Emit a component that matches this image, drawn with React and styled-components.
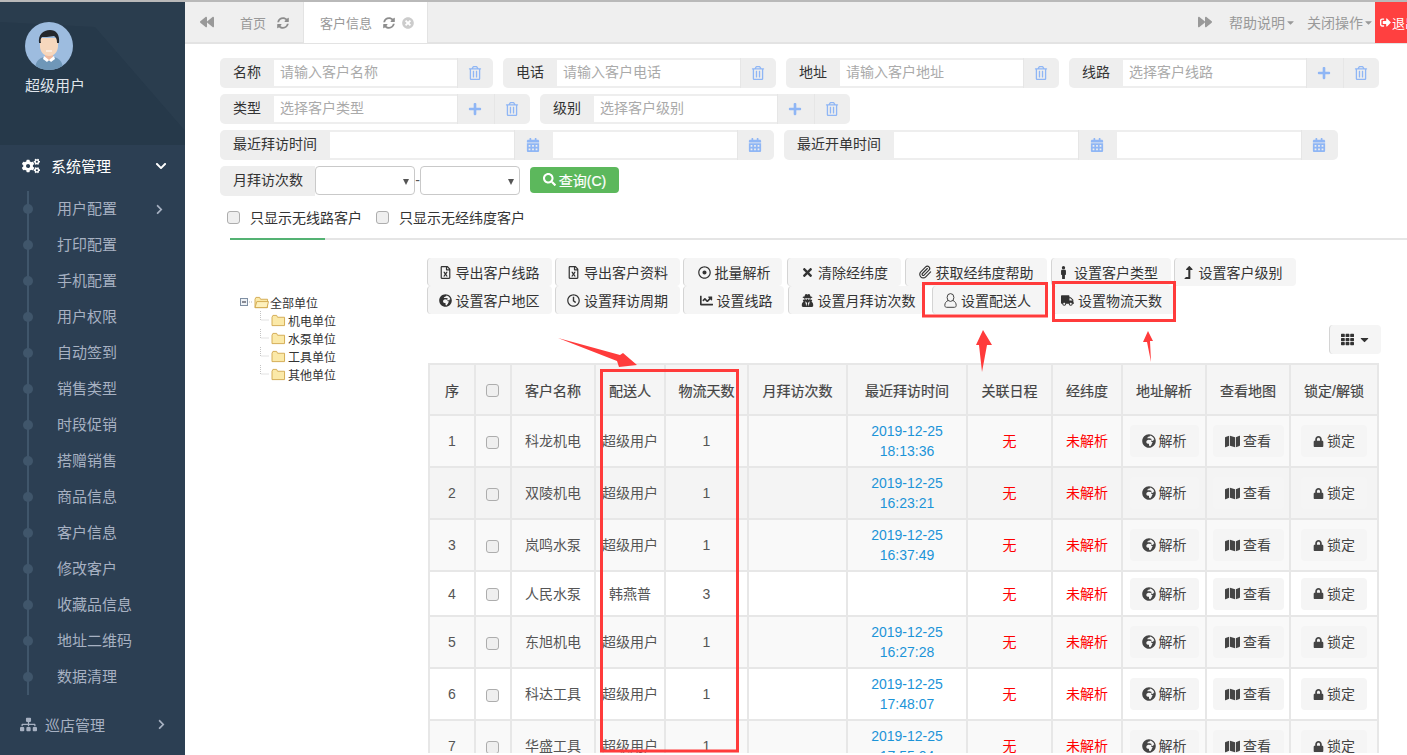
import React from 'react';
import styled, { createGlobalStyle } from 'styled-components';
import {
  FaCogs, FaChevronDown, FaChevronRight, FaSitemap, FaBackward, FaForward, FaSyncAlt, FaTimesCircle,
  FaRegTrashAlt, FaPlus, FaCalendarAlt, FaSearch, FaRegFileExcel, FaRegDotCircle, FaTimes,
  FaMale, FaLevelUpAlt, FaGlobeAfrica, FaRegClock, FaChartLine, FaUserSecret, FaTruck, FaTh,
  FaMap, FaLock, FaSignOutAlt, FaCaretDown,
} from 'react-icons/fa';
import { Paperclip } from 'lucide-react';

const Global = createGlobalStyle`
  html, body { margin: 0; padding: 0; height: 100%; overflow: hidden; background: #fff; }
  body { font-family: "Liberation Sans", "Noto Sans CJK SC", sans-serif; font-size: 14px; color: #555; }
  * { box-sizing: border-box; }
`;

const Page = styled.div`
  position: relative;
  display: flex;
  height: 755px;
  width: 1407px;
  overflow: hidden;
  border-top: 2px solid #b9b9b9;
`;
const Sidebar = styled.aside`
  width: 185px;
  flex: none;
  background: #2c3f53;
  color: #a7b1c2;
`;
const Profile = styled.div`
  position: relative;
  height: 143px;
  background: #26394a;
  padding: 20px 0 0 25px;
  overflow: hidden;
  &::before {
    content: '';
    position: absolute;
    inset: 0;
    background: #2a3d4e;
    clip-path: polygon(0 0, 100% 0, 100% 90%, 95px 25px, 0 20px);
  }
`;
const AvatarSvg = styled.svg`
  position: relative;
  display: block;
  width: 48px;
  height: 48px;
`;
const ProfileName = styled.div`
  position: relative;
  margin-top: 5px;
  font-size: 15px;
  line-height: 22px;
  color: #dfe4ea;
`;
const MenuHead = styled.div`
  height: 44px;
  display: flex;
  align-items: center;
  padding: 0 18px 3px ${p => (p.$open ? 22 : 20)}px;
  font-size: 15px;
  color: ${p => (p.$open ? '#fff' : '#a7b1c2')};
  margin-top: ${p => p.$mt || 0}px;
  span { margin-left: ${p => (p.$open ? 11 : 8)}px; flex: 1; }
`;
const SubMenu = styled.ul`
  position: relative;
  list-style: none;
  margin: 2px 0 0;
  padding: 0;
  &::before {
    content: '';
    position: absolute;
    left: 27px;
    top: 0;
    bottom: 0;
    width: 2px;
    background: #40566b;
  }
`;
const SubItem = styled.li`
  position: relative;
  height: 36px;
  line-height: 36px;
  padding: 0 20px 0 57px;
  font-size: 15px;
  color: #a7b1c2;
  display: flex;
  align-items: center;
  justify-content: space-between;
  &::before {
    content: '';
    position: absolute;
    left: 23px;
    top: 13px;
    width: 10px;
    height: 10px;
    border-radius: 50%;
    background: #40566b;
  }
`;
const Main = styled.main`
  flex: 1;
  min-width: 0;
  height: 751px;
  overflow: hidden;
  display: flex;
  flex-direction: column;
`;
const TabBar = styled.div`
  height: 42px;
  flex: none;
  background: #efefef;
  border-bottom: 2px solid #e3e3e3;
  display: flex;
  align-items: stretch;
  color: #999;
  font-size: 13px;
`;
const TabArrow = styled.div`
  width: ${p => p.$w}px;
  display: flex;
  align-items: center;
  justify-content: center;
  color: #999;
  font-size: 14px;
`;
const Tab = styled.div`
  display: flex;
  align-items: center;
  padding: ${p => (p.$active ? '0 13px 0 16px' : '0 14px 0 12px')};
  background: ${p => (p.$active ? '#fff' : 'transparent')};
  border-right: 1px solid #e3e3e3;
  margin-bottom: -1px;
  svg { color: #8d8d8d; font-size: 12px; margin-left: 11px; }
  svg.close { color: #ccc; margin-left: 7px; }
`;
const Spacer = styled.div`flex: 1;`;
const TabMenu = styled.div`
  display: flex;
  align-items: center;
  padding: 0 1px 0 0;
  margin-left: ${p => p.$ml || 0}px;
  font-size: 14px;
  svg { font-size: 11px; }
`;
const Logout = styled.div`
  width: 32px;
  background: #ff4040;
  color: #fff;
  display: flex;
  align-items: center;
  padding-left: 5px;
  overflow: hidden;
  white-space: nowrap;
  font-size: 13px;
  margin-bottom: -1px;
  svg { flex: none; font-size: 11px; margin-right: 1px; }
`;
const Content = styled.div`
  padding: 14px 0 0 35px;
  flex: 1;
`;
const FormRow = styled.div`
  display: flex;
  gap: 10px;
  height: 30px;
  margin-bottom: 6px;
`;
const Group = styled.div`
  display: flex;
  width: ${p => p.$w}px;
  height: 30px;
`;
const Label = styled.div`
  width: ${p => p.$w || 54}px;
  flex: none;
  background: #eee;
  border-radius: 5px 0 0 5px;
  color: #333;
  font-size: 14px;
  line-height: 28px;
  padding-left: 13px;
`;
const TextBox = styled.div`
  flex: 1;
  background: #fff;
  border-top: 2px solid #eee;
  border-bottom: 2px solid #eee;
  color: #aaa;
  font-size: 14px;
  line-height: 24px;
  padding-left: 6px;
`;
const Addon = styled.div`
  width: ${p => p.$w || 36}px;
  flex: none;
  background: #eee;
  display: flex;
  align-items: center;
  justify-content: center;
  color: #8fb6f5;
  font-size: 14px;
  padding-right: 2px;
  border-left: 1px solid #e6e6e6;
  &:last-child { border-radius: 0 5px 5px 0; }
`;
const SelectBox = styled.div`
  position: relative;
  width: 100px;
  height: 29px;
  background: #fff;
  border: 1px solid #c9c9c9;
  border-radius: 4px;
  &::after {
    content: '';
    position: absolute;
    right: 5px;
    top: 12px;
    border-left: 3.5px solid transparent;
    border-right: 3.5px solid transparent;
    border-top: 6px solid #555;
  }
`;
const Dash = styled.span`
  width: 5px;
  color: #555;
  line-height: 28px;
  text-align: center;
`;
const InlineGroup = styled.div`
  display: flex;
  height: 30px;
`;
const SearchBtn = styled.div`
  width: 89px;
  height: 26px;
  margin: 1px 0 0 10px;
  background: #5cb85c;
  color: #fff;
  border-radius: 4px;
  font-size: 14px;
  padding-bottom: 1px;
  display: flex;
  align-items: center;
  justify-content: center;
  gap: 3px;
  -webkit-text-stroke: 0.2px #fff;
  svg { font-size: 13px; }
`;
const Checks = styled.div`
  display: flex;
  align-items: center;
  height: 30px;
  margin: 2px 0 0 7px;
  color: #333;
  font-size: 14px;
`;
const Box = styled.span`
  display: block;
  width: 13px;
  height: 13px;
  background: #efefef;
  border: 1px solid #adadad;
  border-radius: 3px;
  flex: none;
`;
const TableBox = styled(Box)`
  margin: 2px auto 0;
  transform: translateX(-1px);
`;
const CheckText = styled.span`
  margin: 0 14px 0 10px;
`;
const TabLine = styled.div`
  margin: 6px 0 0 10px;
  height: 2px;
  background: #e5e5e5;
  &::before {
    content: '';
    display: block;
    width: 95px;
    height: 2px;
    background: #54b273;
  }
`;
const Lower = styled.div`
  display: flex;
  margin-top: 18px;
`;
const TreePane = styled.div`
  width: 207px;
  flex: none;
  padding: 35px 0 0 20px;
  font-size: 12px;
  color: #333;
`;
const TreeRow = styled.div`
  display: flex;
  align-items: center;
  height: 18px;
  gap: ${p => (p.$child ? 2 : 1)}px;
  padding-left: ${p => (p.$child ? 19 : 0)}px;
  svg { flex: none; }
`;
const RightPane = styled.div`
  width: 954px;
  flex: none;
`;
const ToolRow = styled.div`
  display: flex;
  height: 28px;
`;
const ToolBtn = styled.div`
  width: ${p => p.$w}px;
  margin-right: ${p => p.$mr ?? 3}px;
  height: 28px;
  flex: none;
  background: #f5f5f5;
  border-left: 1px solid #d4d4d4;
  border-radius: 4px;
  color: #333;
  font-size: 14px;
  padding: 0 ${p => p.$pr || 0}px 0 ${p => p.$pl || 0}px;
  display: flex;
  align-items: center;
  justify-content: center;
  gap: 4px;
  white-space: nowrap;
  svg { font-size: 13px; flex: none; }
`;
const ColumnsRow = styled.div`
  display: flex;
  justify-content: flex-end;
  margin: 11px 0 9px;
  height: 29px;
`;
const ColumnsBtn = styled.div`
  width: 52px;
  height: 29px;
  background: #f5f5f5;
  border-left: 1px solid #d4d4d4;
  border-radius: 4px;
  color: #333;
  display: flex;
  align-items: center;
  justify-content: center;
  gap: 4px;
  svg { font-size: 13px; }
`;
const Table = styled.table`
  width: 949px;
  margin-left: 1px;
  table-layout: fixed;
  border-collapse: collapse;
  font-size: 14px;
  color: #555;
`;
const HeadRow = styled.tr`
  height: 51px;
`;
const Th = styled.th`
  background: #f5f5f5;
  border: 2px solid #e7e7e7;
  color: #444;
  font-size: 14px;
  font-weight: normal;
  -webkit-text-stroke: 0.2px #444;
  text-align: center;
  padding: 0;
`;
const Tr = styled.tr`
  height: ${p => p.$h}px;
  background: ${p => p.$bg};
`;
const Td = styled.td`
  border: 2px solid #e7e7e7;
  text-align: center;
  padding: 0;
  line-height: 20px;
  white-space: nowrap;
  color: ${p => p.$color || '#555'};
`;
const DateCell = styled.div`
  color: #1c94d8;
  font-size: 14px;
  line-height: 20px;
`;
const CellBtn = styled.div`
  display: inline-flex;
  vertical-align: middle;
  align-items: center;
  justify-content: center;
  gap: 3px;
  width: ${p => p.$w}px;
  height: 32px;
  background: #f5f5f5;
  border-radius: 4px;
  color: #444;
  font-size: 14px;
  svg { font-size: ${p => p.$icon || 13}px; }
`;
const Overlay = styled.svg`
  position: absolute;
  left: 0;
  top: -2px;
  width: 1407px;
  height: 755px;
  pointer-events: none;
`;

const Avatar = () => (
  <AvatarSvg viewBox="0 0 48 48">
    <clipPath id="av"><circle cx="24" cy="24" r="24" /></clipPath>
    <g clipPath="url(#av)">
      <rect width="48" height="48" fill="#9dbcdf" />
      <path d="M10 48 C10 38 15 35 24 34 C33 35 38 38 38 48Z" fill="#6f97b8" />
      <path d="M20 30h8v6l-4 3-4-3z" fill="#eeb9a0" />
      <path d="M19 34l5 4 5-4 1 3-4 3-2-2-2 2-4-3z" fill="#fff" />
      <path d="M15 16h18v8c0 6-4 10-9 10s-9-4-9-10z" fill="#f6d7bd" />
      <path d="M14 21c-1-8 4-13 11-13 6 0 10 4 9 13l-2 0c0-4-1-6-3-7-5 1-10 1-12 1-1 1-2 3-1 6z" fill="#25282d" />
      <path d="M21 29h6" stroke="#fff" strokeWidth="1" />
    </g>
  </AvatarSvg>
);

const Folder = ({ open }) => (
  <svg width="15" height="13" viewBox="0 0 16 14">
    <path d="M1 3.5V12.5H14.5V3.5H7L6 1.5H2L1 3.5Z" fill="#fbe9a8" stroke="#d2a94f" strokeWidth="1" />
    {open && <path d="M1 12.5L3 6H15.5L14 12.5Z" fill="#fdf0bc" stroke="#d2a94f" strokeWidth="1" />}
  </svg>
);
const Minus = () => (
  <svg width="13" height="10" viewBox="0 0 13 10">
    <rect x="0.5" y="1.5" width="7" height="7" fill="#eef2f6" stroke="#7f8fa3" />
    <path d="M2 5H6" stroke="#223" strokeWidth="1" />
    <path d="M9 5H13" stroke="#bbb" strokeDasharray="1 1" />
  </svg>
);
const Branch = () => (
  <svg width="10" height="18" viewBox="0 0 10 18">
    <path d="M1.5 0V9H10" stroke="#c4c4c4" strokeDasharray="1 1" fill="none" />
  </svg>
);
const UserOutline = () => (
  <svg width="13" height="15" viewBox="0 0 13 15" fill="none" stroke="#444" strokeWidth="1">
    <ellipse cx="6.5" cy="4.5" rx="3.4" ry="3.9" />
    <path d="M4 7.5C2 8.5 0.8 10 0.8 12.5C0.8 13.6 1.5 14.3 2.6 14.3H10.4C11.5 14.3 12.2 13.6 12.2 12.5C12.2 10 11 8.5 9 7.5" />
  </svg>
);

const menu = ['用户配置', '打印配置', '手机配置', '用户权限', '自动签到', '销售类型', '时段促销', '搭赠销售', '商品信息', '客户信息', '修改客户', '收藏品信息', '地址二维码', '数据清理'];

const Field = ({ w, lw, label, ph, plus }) => (
  <Group $w={w}>
    <Label $w={lw}>{label}</Label>
    <TextBox>{ph}</TextBox>
    {plus && <Addon $w={37}><FaPlus /></Addon>}
    <Addon><FaRegTrashAlt /></Addon>
  </Group>
);

const DateRange = ({ label }) => (
  <Group $w={554}>
    <Label $w={110}>{label}</Label>
    <TextBox />
    <Addon $w={39}><FaCalendarAlt /></Addon>
    <TextBox />
    <Addon $w={37}><FaCalendarAlt /></Addon>
  </Group>
);

const tools1 = [
  { w: 125, ic: <FaRegFileExcel />, t: '导出客户线路', pr: 2 },
  { w: 125, ic: <FaRegFileExcel />, t: '导出客户资料', pr: 1 },
  { w: 99, ic: <FaRegDotCircle />, t: '批量解析', mr: 5, pl: 2 },
  { w: 114, ic: <FaTimes />, t: '清除经纬度', mr: 4 },
  { w: 142, ic: <Paperclip size={14} strokeWidth={2} />, t: '获取经纬度帮助', mr: 4, pr: 2 },
  { w: 120, ic: <FaMale />, t: '设置客户类型', pr: 8 },
  { w: 122, ic: <FaLevelUpAlt />, t: '设置客户级别', pr: 7 },
];
const tools2 = [
  { w: 125, ic: <FaGlobeAfrica />, t: '设置客户地区', pr: 2 },
  { w: 125, ic: <FaRegClock />, t: '设置拜访周期', pr: 1 },
  { w: 101, ic: <FaChartLine />, t: '设置线路', mr: 4, pl: 4 },
  { w: 135, ic: <FaUserSecret />, t: '设置月拜访次数', mr: 9, pl: 4 },
  { w: 114, ic: <UserOutline />, t: '设置配送人', mr: 7, pr: 4 },
  { w: 122, ic: <FaTruck />, t: '设置物流天数', pr: 6 },
];

const cols = [46, 36, 84, 70, 83, 99, 120, 85, 70, 84, 84, 88];
const heads = ['序', null, '客户名称', '配送人', '物流天数', '月拜访次数', '最近拜访时间', '关联日程', '经纬度', '地址解析', '查看地图', '锁定/解锁'];
const rows = [
  { n: 1, name: '科龙机电', who: '超级用户', days: 1, date: '2019-12-25', time: '18:13:36', bg: '#f9f9f9' },
  { n: 2, name: '双陵机电', who: '超级用户', days: 1, date: '2019-12-25', time: '16:23:21', bg: '#f4f4f4' },
  { n: 3, name: '岚鸣水泵', who: '超级用户', days: 1, date: '2019-12-25', time: '16:37:49', bg: '#f9f9f9' },
  { n: 4, name: '人民水泵', who: '韩燕普', days: 3, bg: '#fff' },
  { n: 5, name: '东旭机电', who: '超级用户', days: 1, date: '2019-12-25', time: '16:27:28', bg: '#f9f9f9' },
  { n: 6, name: '科达工具', who: '超级用户', days: 1, date: '2019-12-25', time: '17:48:07', bg: '#fff' },
  { n: 7, name: '华盛工具', who: '超级用户', days: 1, date: '2019-12-25', time: '17:55:04', bg: '#f9f9f9' },
];

const ToolButtons = ({ items }) => (
  <ToolRow>
    {items.map(b => (
      <ToolBtn key={b.t} $w={b.w} $mr={b.mr} $pr={b.pr} $pl={b.pl}>{b.ic}{b.t}</ToolBtn>
    ))}
  </ToolRow>
);

export default function App() {
  return (
    <>
      <Global />
      <Page>
        <Sidebar>
          <Profile>
            <Avatar />
            <ProfileName>超级用户</ProfileName>
          </Profile>
          <MenuHead $open>
            <FaCogs size={18} /><span>系统管理</span><FaChevronDown size={12} />
          </MenuHead>
          <SubMenu>
            {menu.map((m, i) => (
              <SubItem key={m}>{m}{i === 0 && <FaChevronRight size={11} />}</SubItem>
            ))}
          </SubMenu>
          <MenuHead $mt={9}>
            <FaSitemap size={17} /><span>巡店管理</span><FaChevronRight size={11} />
          </MenuHead>
        </Sidebar>
        <Main>
          <TabBar>
            <TabArrow $w={43}><FaBackward /></TabArrow>
            <Tab>首页<FaSyncAlt /></Tab>
            <Tab $active>客户信息<FaSyncAlt /><FaTimesCircle className="close" /></Tab>
            <Spacer />
            <TabArrow $w={28}><FaForward /></TabArrow>
            <TabMenu $ml={10}>帮助说明<FaCaretDown /></TabMenu>
            <TabMenu $ml={10}>关闭操作<FaCaretDown /></TabMenu>
            <Logout><FaSignOutAlt />退出</Logout>
          </TabBar>
          <Content>
            <FormRow>
              <Field w={273} label="名称" ph="请输入客户名称" />
              <Field w={273} label="电话" ph="请输入客户电话" />
              <Field w={273} label="地址" ph="请输入客户地址" />
              <Field w={310} label="线路" ph="选择客户线路" plus />
            </FormRow>
            <FormRow>
              <Field w={310} label="类型" ph="选择客户类型" plus />
              <Field w={310} label="级别" ph="选择客户级别" plus />
            </FormRow>
            <FormRow>
              <DateRange label="最近拜访时间" />
              <DateRange label="最近开单时间" />
            </FormRow>
            <FormRow>
              <InlineGroup>
                <Label $w={95}>月拜访次数</Label>
                <SelectBox />
                <Dash>-</Dash>
                <SelectBox />
                <SearchBtn><FaSearch />查询(C)</SearchBtn>
              </InlineGroup>
            </FormRow>
            <Checks>
              <Box /><CheckText>只显示无线路客户</CheckText>
              <Box /><CheckText>只显示无经纬度客户</CheckText>
            </Checks>
            <TabLine />
            <Lower>
              <TreePane>
                <TreeRow><Minus /><Folder open />全部单位</TreeRow>
                {['机电单位', '水泵单位', '工具单位', '其他单位'].map(t => (
                  <TreeRow $child key={t}><Branch /><Folder />{t}</TreeRow>
                ))}
              </TreePane>
              <RightPane>
                <ToolButtons items={tools1} />
                <ToolButtons items={tools2} />
                <ColumnsRow>
                  <ColumnsBtn><FaTh /><FaCaretDown /></ColumnsBtn>
                </ColumnsRow>
                <Table>
                  <colgroup>{cols.map((c, i) => <col key={i} width={c} />)}</colgroup>
                  <thead>
                    <HeadRow>
                      {heads.map((h, i) => <Th key={i}>{h ?? <TableBox />}</Th>)}
                    </HeadRow>
                  </thead>
                  <tbody>
                    {rows.map(r => (
                      <Tr key={r.n} $h={r.date ? 52 : 45} $bg={r.bg}>
                        <Td>{r.n}</Td>
                        <Td><TableBox /></Td>
                        <Td>{r.name}</Td>
                        <Td>{r.who}</Td>
                        <Td>{r.days}</Td>
                        <Td />
                        <Td>{r.date && <DateCell>{r.date}<br />{r.time}</DateCell>}</Td>
                        <Td $color="#f00">无</Td>
                        <Td $color="#f00">未解析</Td>
                        <Td><CellBtn $w={69} $icon={14}><FaGlobeAfrica />解析</CellBtn></Td>
                        <Td><CellBtn $w={71} $icon={15}><FaMap />查看</CellBtn></Td>
                        <Td><CellBtn $w={66} $icon={11}><FaLock />锁定</CellBtn></Td>
                      </Tr>
                    ))}
                  </tbody>
                </Table>
              </RightPane>
            </Lower>
          </Content>
        </Main>
        <Overlay viewBox="0 0 1407 755">
          <g fill="none" stroke="#ff3b3b" strokeWidth="3">
            <rect x="601.5" y="370.5" width="136" height="380.5" />
            <rect x="923.5" y="283.5" width="123" height="32.5" />
            <rect x="1053.5" y="282.5" width="121" height="38" />
          </g>
          <g fill="#ff3b3b">
            <path d="M558 338 L620 355 L623 353 L637 365 L619 367 L617 361 Z" />
            <path d="M983 330 L992 345 L987 345 L982 372 L979 345 L976 345 Z" />
            <path d="M1148 331 L1153 341 L1150 341 L1151 362 L1147 342 L1143 342 Z" />
          </g>
        </Overlay>
      </Page>
    </>
  );
}
